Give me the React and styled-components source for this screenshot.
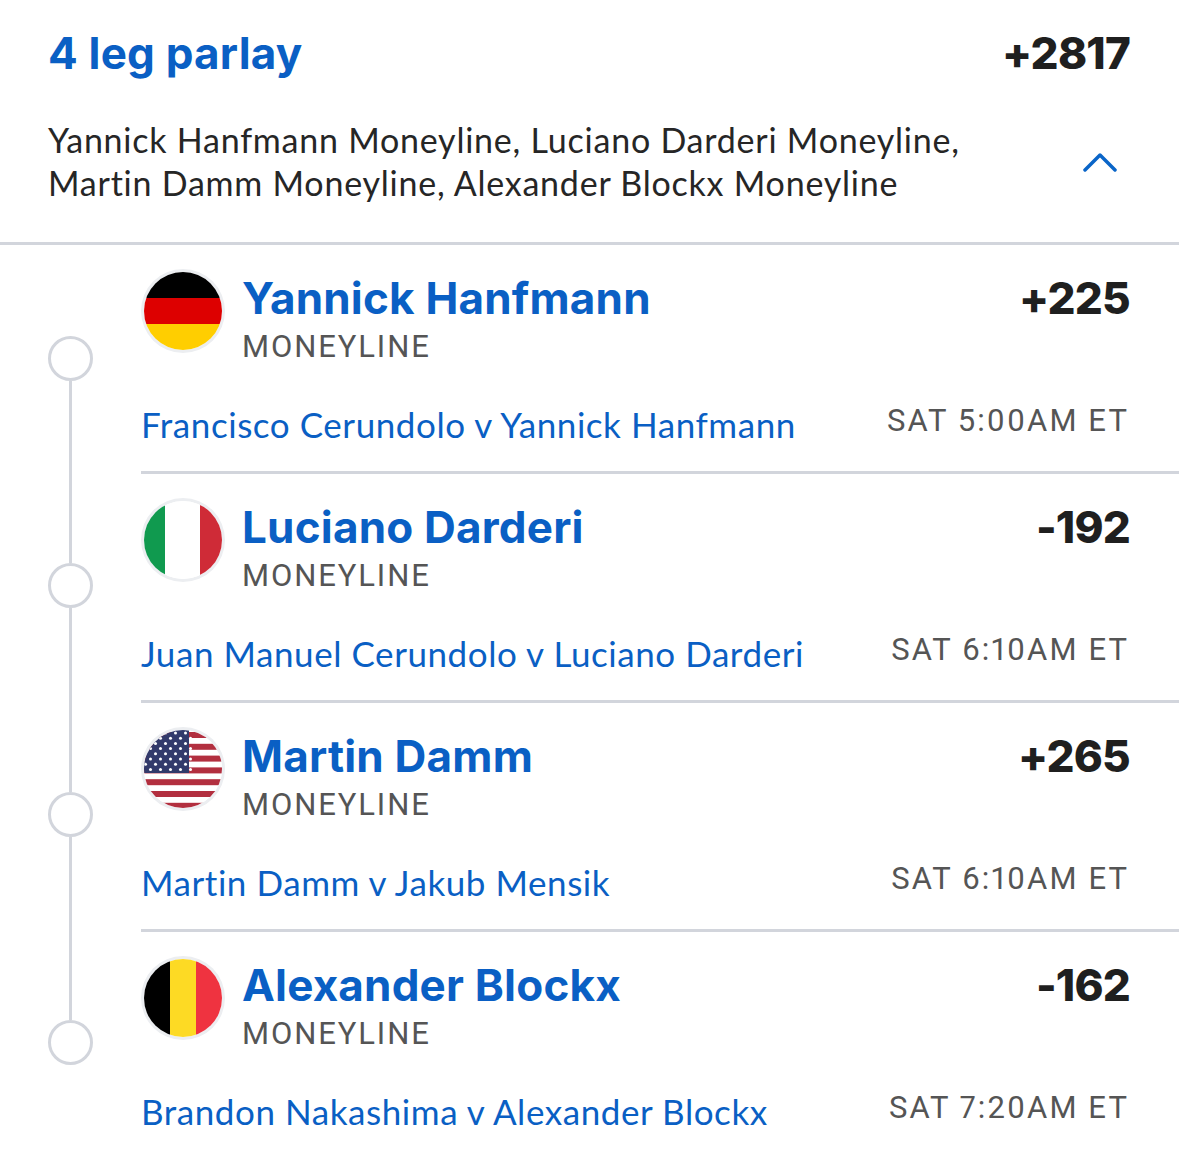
import React from "react";
import styled, { createGlobalStyle } from "styled-components";

const GlobalStyle = createGlobalStyle`
    html, body {
        margin: 0;
        padding: 0;
        background: #fff;
    }
    body {
        font-family: "Lato", "Liberation Sans", sans-serif;
        font-variant-ligatures: none;
    }
`;

const legs = [
    { name: "Yannick Hanfmann", odds: "+225", game: "Francisco Cerundolo v Yannick Hanfmann", time: "SAT 5:00AM ET", flag: "de", railTop: 91 },
    { name: "Luciano Darderi", odds: "-192", game: "Juan Manuel Cerundolo v Luciano Darderi", time: "SAT 6:10AM ET", flag: "it", railTop: 89 },
    { name: "Martin Damm", odds: "+265", game: "Martin Damm v Jakub Mensik", time: "SAT 6:10AM ET", flag: "us", railTop: 89 },
    { name: "Alexander Blockx", odds: "-162", game: "Brandon Nakashima v Alexander Blockx", time: "SAT 7:20AM ET", flag: "be", railTop: 88 },
];

const Flag = ({ type }) => {
    let art = null;
    if (type === "de") {
        art = (
            <>
                <rect x="0" y="0" width="78" height="26" fill="#000" />
                <rect x="0" y="26" width="78" height="26" fill="#dd0000" />
                <rect x="0" y="52" width="78" height="26" fill="#ffce00" />
            </>
        );
    } else if (type === "it") {
        art = (
            <>
                <rect x="0" y="0" width="21" height="78" fill="#109a4f" />
                <rect x="21" y="0" width="35" height="78" fill="#fff" />
                <rect x="56" y="0" width="22" height="78" fill="#cf2b37" />
            </>
        );
    } else if (type === "be") {
        art = (
            <>
                <rect x="0" y="0" width="26" height="78" fill="#000" />
                <rect x="26" y="0" width="26" height="78" fill="#fdda24" />
                <rect x="52" y="0" width="26" height="78" fill="#ef3340" />
            </>
        );
    } else {
        const stripes = [0, 1, 2, 3, 4, 5, 6];
        const stars = [];
        for (let row = 0; row < 8; row++) {
            for (let col = 0; col < 5; col++) {
                const x = 1.5 + col * 10 + (row % 2 ? 5 : 0);
                stars.push(<circle key={row + "-" + col} cx={x} cy={3 + row * 5.2} r="1.5" fill="#fff" />);
            }
        }
        art = (
            <>
                <rect x="0" y="0" width="78" height="78" fill="#fff" />
                {stripes.map((n) => <rect key={n} x="0" y={2 + n * 11.8} width="78" height="6" fill="#b22f3f" />)}
                <rect x="0" y="0" width="45" height="43" fill="#323a6b" />
                {stars}
            </>
        );
    }
    return (
        <FlagBadge>
            <svg viewBox="0 0 78 78" width="78" height="78">{art}</svg>
        </FlagBadge>
    );
};

const App = () => {
    return (
        <Page>
            <GlobalStyle />
            <Header>
                <TitleRow>
                    <Title>4 leg parlay</Title>
                    <TotalOdds>+2817</TotalOdds>
                </TitleRow>
                <SummaryRow>
                    <Summary>
                        Yannick Hanfmann Moneyline, Luciano Darderi Moneyline,<br />
                        Martin Damm Moneyline, Alexander Blockx Moneyline
                    </Summary>
                    <svg width="36" height="22" viewBox="0 0 36 22" fill="none">
                        <path d="M3 20 L18 5 L33 20" stroke="#0a65c8" strokeWidth="3.5" strokeLinecap="round" strokeLinejoin="round" />
                    </svg>
                </SummaryRow>
            </Header>
            {legs.map((leg, i) => (
                <Leg key={leg.name}>
                    <Rail>
                        <RailLine $height={leg.railTop} $hidden={i === 0} />
                        <RailDot />
                        <RailLine $grow $hidden={i === legs.length - 1} />
                    </Rail>
                    <LegBody $last={i === legs.length - 1}>
                        <Runner>
                            <Flag type={leg.flag} />
                            <RunnerText>
                                <RunnerName>{leg.name}</RunnerName>
                                <Market>MONEYLINE</Market>
                            </RunnerText>
                            <LegOdds>{leg.odds}</LegOdds>
                        </Runner>
                        <GameRow>
                            <Game>{leg.game}</Game>
                            <GameTime>{leg.time}</GameTime>
                        </GameRow>
                    </LegBody>
                </Leg>
            ))}
        </Page>
    );
};

const Page = styled.div`
    width: 1179px;
    height: 1150px;
    overflow: hidden;
    background: #fff;
`;

const Header = styled.header`
    height: 216px;
    padding: 26px 49px 0 48px;
    border-bottom: 3px solid #d2d5dc;
`;

const TitleRow = styled.div`
    display: flex;
    justify-content: space-between;
    align-items: center;
    height: 54px;
`;

const Title = styled.h1`
    margin: 0;
    font-family: "Inter", sans-serif;
    font-size: 44px;
    font-weight: 700;
    letter-spacing: 0.2px;
    color: #0a5fc4;
`;

const TotalOdds = styled.div`
    font-family: "Inter", sans-serif;
    font-size: 44px;
    font-weight: 800;
    letter-spacing: -0.8px;
    color: #1f1f1f;
`;

const SummaryRow = styled.div`
    display: flex;
    justify-content: space-between;
    align-items: center;
    margin-top: 38px;
    padding-right: 12px;
`;

const Summary = styled.p`
    margin: 0;
    font-size: 34px;
    line-height: 43px;
    letter-spacing: 0.77px;
    color: #262626;
`;

const Leg = styled.section`
    display: flex;
    height: 229px;
`;

const Rail = styled.div`
    width: 141px;
    flex: none;
    padding: 0 48px;
    box-sizing: border-box;
    display: flex;
    flex-direction: column;
    align-items: center;
`;

const RailLine = styled.div`
    width: 3px;
    background: ${(p) => (p.$hidden ? "transparent" : "#d2d5dc")};
    height: ${(p) => (p.$height ? p.$height + "px" : "auto")};
    flex: ${(p) => (p.$grow ? 1 : "none")};
`;

const RailDot = styled.div`
    width: 45px;
    height: 45px;
    flex: none;
    box-sizing: border-box;
    border: 3px solid #d2d5dc;
    border-radius: 50%;
`;

const LegBody = styled.div`
    flex: 1;
    box-sizing: border-box;
    padding: 26px 49px 0 0;
    border-bottom: 3px solid ${(p) => (p.$last ? "transparent" : "#d2d5dc")};
`;

const Runner = styled.div`
    display: flex;
    align-items: flex-start;
`;

const FlagBadge = styled.div`
    width: 78px;
    height: 78px;
    flex: none;
    margin: 1px 0 0 3px;
    border-radius: 50%;
    overflow: hidden;
    box-shadow: 0 0 0 3px #eceef1;

    svg {
        display: block;
    }
`;

const RunnerText = styled.div`
    margin-left: 20px;
    flex: 1;
`;

const RunnerName = styled.div`
    font-family: "Inter", sans-serif;
    font-size: 44px;
    font-weight: 700;
    line-height: 54px;
    letter-spacing: 0.2px;
    color: #0a5fc4;
`;

const Market = styled.div`
    font-family: "Roboto", sans-serif;
    font-size: 31px;
    line-height: 40px;
    letter-spacing: 1.9px;
    margin-top: 2px;
    color: #555;
`;

const LegOdds = styled.div`
    font-family: "Inter", sans-serif;
    font-size: 44px;
    font-weight: 800;
    line-height: 54px;
    letter-spacing: -0.8px;
    color: #1f1f1f;
`;

const GameRow = styled.div`
    display: flex;
    justify-content: space-between;
    align-items: center;
    margin-top: 36px;
`;

const Game = styled.div`
    font-size: 35px;
    line-height: 42px;
    letter-spacing: 0.56px;
    color: #0a5fc4;
`;

const GameTime = styled.div`
    font-family: "Roboto", sans-serif;
    font-size: 31px;
    line-height: 36px;
    letter-spacing: 2.1px;
    font-variant-numeric: proportional-nums;
    color: #555;
    margin: -6px 1px 0 0;
`;

export default App;
